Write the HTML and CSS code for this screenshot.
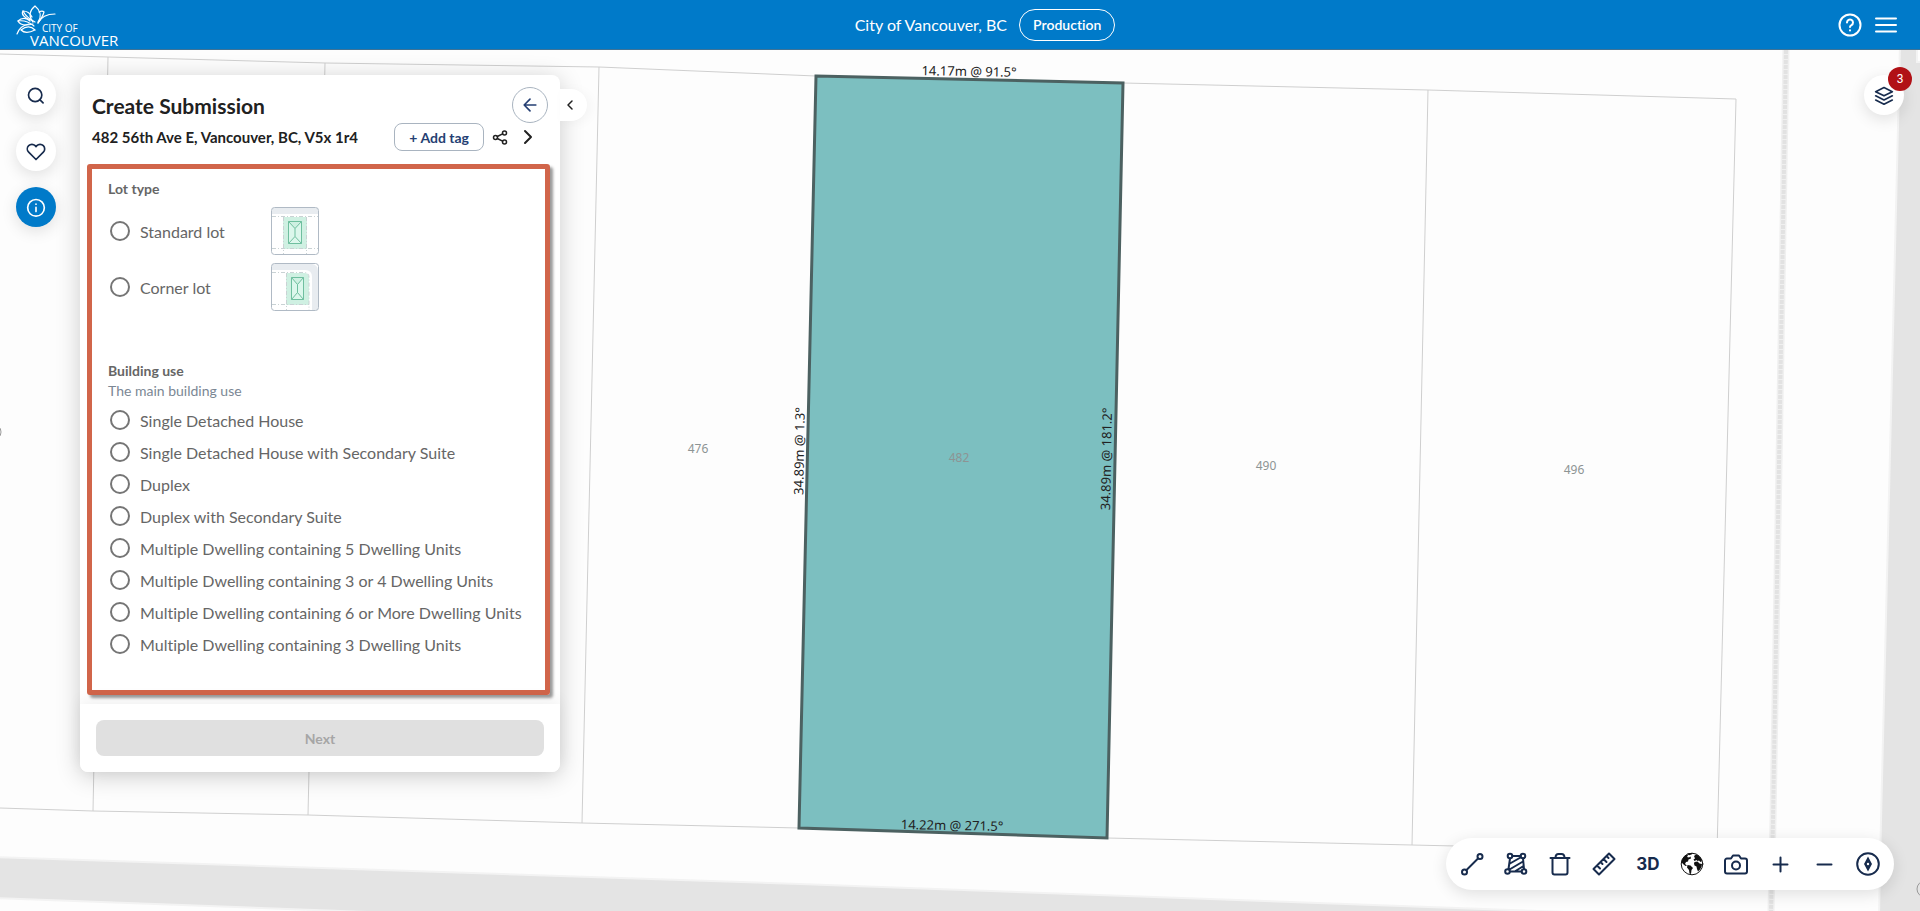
FILE: index.html
```
<!DOCTYPE html>
<html lang="en">
<head>
    <meta charset="UTF-8">
    <meta name="viewport" content="width=device-width, initial-scale=1.0">
    <title>City of Vancouver, BC</title>
    <link rel="stylesheet" href="styles.css">
</head>
<body>

    <header class="header">
        <a class="logo" href="#" aria-label="City of Vancouver">
            <svg width="116" height="48" viewBox="0 0 116 48" fill="none" stroke="#fff" stroke-width="1.2" stroke-linecap="round">
                <path d="M17 21C12 15 14 9 19 5c5 4 7 10 3 16"/>
                <path d="M15 19C8 17 5 13 7 10c4 0 7 2 9 6"/>
                <path d="M19 21C13 18 9 14 7 10"/>
                <path d="M23 11c2-1 4-1 5 0-1 4-3 7-6 11"/>
                <path d="M22 22c3-6 8-9 17-9"/>
                <path d="M14 20c-3-3-8-4-12 0 2 4 7 5 15 3"/>
                <path d="M2 20c6-1 11 1 16 5M1 33c2-6 6-9 12-10M5 29c3 3 8 3 14 0-4-4-9-4-14 0"/>
                <text class="logo-small" x="26" y="31">CITY OF</text>
                <text class="logo-big" x="14" y="45">VANCOUVER</text>
            </svg>
        </a>
        <div class="header-title">
            <span>City of Vancouver, BC</span>
            <span class="pill">Production</span>
        </div>
        <div class="header-actions">
            <button class="header-btn" aria-label="Help">
                <svg width="24" height="24" viewBox="0 0 24 24" fill="none" stroke="#fff" stroke-width="2" stroke-linecap="round"><circle cx="12" cy="12" r="10.500"/><path d="M9 9.500a3 3 0 1 1 4.500 2.600c-1 .6-1.500 1-1.500 2"/><path d="M12 17.300v.1"/></svg>
            </button>
            <button class="header-btn" aria-label="Menu">
                <svg width="24" height="24" viewBox="0 0 24 24" fill="none" stroke="#fff" stroke-width="2" stroke-linecap="round"><path d="M2 5.500h20M2 12h20M2 18.500h20"/></svg>
            </button>
        </div>
    </header>

    <main class="workspace">
        <svg class="map" viewBox="0 50 1920 861" preserveAspectRatio="xMidYMin slice">
            <!-- roads -->
            <g class="road">
                <path d="M-5 857L800 884L1620 914H420L-5 898z"/>
                <path d="M1900 45L1881 820L1879 915H1925V62H1917V45z"/>
            </g>
            <path class="rail" d="M1786 50L1773 820L1771 911"/>
            <path class="rail-dash" d="M1786 50L1773 820L1771 911"/>
            <!-- lot lines -->
            <g class="lot">
                <path d="M0 54L108 57L325 63L599 67L816 76L1123 83L1428 90L1736 99L1717 852"/>
                <path d="M0 808L93 811L308 815L582 823L799 828L1107 838L1412 845L1717 852"/>
                <path d="M108 57L93 811M325 63L308 815M599 67L582 823M1428 90L1412 845"/>
            </g>
            <path class="parcel" d="M816 76L1123 83L1107 838L799 828z"/>
            <g class="lot-number">
                <text x="698" y="453">476</text>
                <text x="959" y="462">482</text>
                <text x="1266" y="470">490</text>
                <text x="1574" y="474">496</text>
            </g>
            <g class="measure">
                <text x="969" y="76" transform="rotate(1 969 76)">14.17m @ 91.5°</text>
                <text x="952" y="830" transform="rotate(1 952 830)">14.22m @ 271.5°</text>
                <text x="804" y="451" transform="rotate(-89 804 451)">34.89m @ 1.3°</text>
                <text x="1111" y="459" transform="rotate(-89 1111 459)">34.89m @ 181.2°</text>
            </g>
            <circle class="edge-mark" cx="1925" cy="889" r="8"/>
            <circle class="edge-mark" cx="-7" cy="432" r="8"/>
        </svg>

        <nav class="rail-nav">
            <button class="round-btn" aria-label="Search">
                <svg width="20" height="20" viewBox="0 0 24 24"><circle cx="11" cy="12" r="8"/><path d="M20.500 21.500l-4-4"/></svg>
            </button>
            <button class="round-btn" aria-label="Favourites">
                <svg width="20" height="20" viewBox="0 0 24 24"><path d="M20.800 5.600a5.500 5.500 0 0 0-7.800 0L12 6.700l-1-1.100a5.500 5.500 0 0 0-7.800 7.800L12 22.200l8.800-8.800a5.500 5.500 0 0 0 0-7.800z"/></svg>
            </button>
            <button class="round-btn active" aria-label="Information">
                <svg width="20" height="20" viewBox="0 0 24 24"><circle cx="12" cy="13" r="10"/><path d="M12 12.500v5M12 8.500v.1"/></svg>
            </button>
        </nav>

        <section class="panel">
            <div class="panel-head">
                <div class="panel-row">
                    <h1>Create Submission</h1>
                    <button class="back-btn" aria-label="Back">
                        <svg width="20" height="20" viewBox="0 0 24 24"><path d="M19 12H5M12 5l-7 7 7 7"/></svg>
                    </button>
                </div>
                <div class="panel-row">
                    <h2>482 56th Ave E, Vancouver, BC, V5x 1r4</h2>
                    <div class="panel-tools">
                        <button class="tag-btn">+ Add tag</button>
                        <button class="plain-btn" aria-label="Share">
                            <svg width="16" height="16" viewBox="0 0 16 16"><circle cx="12.500" cy="4" r="2"/><circle cx="3.500" cy="8.500" r="2"/><circle cx="12.500" cy="13" r="2"/><path d="M5.300 7.500l5.300-2.600M5.300 9.500l5.300 2.600"/></svg>
                        </button>
                        <button class="plain-btn next-lot" aria-label="Next property">
                            <svg width="16" height="16" viewBox="0 0 16 16"><path d="M5 2l6 6-6 6"/></svg>
                        </button>
                    </div>
                </div>
            </div>

            <form class="form">
                <fieldset class="lot-type">
                    <legend>Lot type</legend>
                    <label class="lot-option">
                        <input type="radio" name="lot">
                        <span>Standard lot</span>
                        <svg width="48" height="48" viewBox="0 0 48 48" fill="none">
                            <rect x="0.500" y="0.500" width="47" height="47" rx="3" fill="#fff"/>
                            <path d="M1 1h46v6H1z" fill="#e8ecf0"/>
                            <path d="M12 10h24v32H12z" fill="#cff0e2"/>
                            <path d="M1 9.500h46M1 41.500h46M12.500 10v37M35.500 10v37" stroke="#c9d2d4" stroke-dasharray="4 2 1 2"/>
                            <path d="M17.500 14.500h13v22h-13zM17.500 14.500l6.500 7 6.500-7M17.500 36.500l6.500-7 6.500 7M24 21.500v8" fill="#dcf7ec" stroke="#6fbf9f"/>
                            <rect x="0.500" y="0.500" width="47" height="47" rx="3" stroke="#b0bac5"/>
                        </svg>
                    </label>
                    <label class="lot-option">
                        <input type="radio" name="lot">
                        <span>Corner lot</span>
                        <svg width="48" height="48" viewBox="0 0 48 48" fill="none">
                            <rect x="0.500" y="0.500" width="47" height="47" rx="3" fill="#fff"/>
                            <path d="M1 1h40q6 1 6 7v39h-6V14q0-7-7-7H1z" fill="#e8ecf0"/>
                            <path d="M15 10h18q5 0 5 5v27H15z" fill="#cff0e2"/>
                            <path d="M1 9.500h32q5 0 5 5V47M1 41.500h37M15.500 10v37" stroke="#c9d2d4" stroke-dasharray="4 2 1 2"/>
                            <path d="M20.500 14.500h12v22h-12zM20.500 14.500l6 7 6-7M20.500 36.500l6-7 6 7M26.500 21.500v8" fill="#dcf7ec" stroke="#6fbf9f"/>
                            <rect x="0.500" y="0.500" width="47" height="47" rx="3" stroke="#b0bac5"/>
                        </svg>
                    </label>
                </fieldset>

                <fieldset class="building-use">
                    <legend>Building use</legend>
                    <p>The main building use</p>
                    <label><input type="radio" name="use"><span>Single Detached House</span></label>
                    <label><input type="radio" name="use"><span>Single Detached House with Secondary Suite</span></label>
                    <label><input type="radio" name="use"><span>Duplex</span></label>
                    <label><input type="radio" name="use"><span>Duplex with Secondary Suite</span></label>
                    <label><input type="radio" name="use"><span>Multiple Dwelling containing 5 Dwelling Units</span></label>
                    <label><input type="radio" name="use"><span>Multiple Dwelling containing 3 or 4 Dwelling Units</span></label>
                    <label><input type="radio" name="use"><span>Multiple Dwelling containing 6 or More Dwelling Units</span></label>
                    <label><input type="radio" name="use"><span>Multiple Dwelling containing 3 Dwelling Units</span></label>
                </fieldset>
            </form>

            <div class="panel-foot">
                <button class="next-btn" disabled>Next</button>
            </div>
        </section>

        <button class="collapse-btn" aria-label="Collapse panel">
            <svg width="16" height="16" viewBox="0 0 16 16"><path d="M10 4L6 8l4 4"/></svg>
        </button>

        <button class="round-btn layers-btn" aria-label="Layers">
            <svg width="20" height="20" viewBox="0 0 24 24"><path d="M12 3L2 8l10 5 10-5zM2 13l10 5 10-5M2 18l10 5 10-5"/></svg>
            <span class="badge">3</span>
        </button>

        <div class="toolbar">
            <button aria-label="Draw line"><svg width="24" height="24" viewBox="0 0 24 24"><circle cx="4.500" cy="20" r="2.500"/><circle cx="20" cy="4.500" r="2.500"/><path d="M6.500 18L18 6.500"/></svg></button>
            <button aria-label="Draw area"><svg width="24" height="24" viewBox="0 0 24 24"><circle cx="6" cy="4" r="2.300"/><circle cx="19" cy="4" r="2.300"/><circle cx="3.500" cy="19.500" r="2.300"/><circle cx="20" cy="19.500" r="2.300"/><path d="M8.500 4h8M19 6.500l1 10.500M6 19.500h11.500M6 6.500L4.500 17M6 11.500L16.500 5.500M5.500 17.500L19 9.500M11.500 19L19.500 14"/></svg></button>
            <button aria-label="Delete"><svg width="24" height="24" viewBox="0 0 24 24"><path d="M2.500 6h19M4.500 6v14.500q0 2 2 2h11q2 0 2-2V6M7.500 6q0-4 3-4h3q3 0 3 4"/></svg></button>
            <button aria-label="Measure"><svg width="24" height="24" viewBox="0 0 24 24"><path d="M1.500 17L17 1.500l5.500 5.500L7 22.500zM5 13.500l3 3M8.500 10l2 2M11.500 7l3 3M14.500 4l2 2"/></svg></button>
            <button class="three-d">3D</button>
            <button aria-label="Basemap"><svg class="globe" width="24" height="24" viewBox="0 0 24 24"><circle cx="12" cy="12" r="10.800" fill="#fff" stroke="#111" stroke-width="1"/><g fill="#111" stroke="none"><path d="M1.500 10C2 6 4.500 3.500 7 2.500l1 1-1 1.500 2 .5 1.500-1 .5 2-2.500 1-.5 2-2 .5L5 12l2 1.500-1.500.5L3 12z"/><path d="M7 1.800Q10 .8 13 1.200l-1.500 1.300-2.500.8z"/><path d="M7.500 13l3 .5 2.500 2.500-1.500 2-.5 4-1.500-.5-.5-3.500-2-2.500z"/><path d="M14 4l2-1.500 2 .8Q21 5.500 22 9l-1.500 1-1.500-1.500-1.500.5-1-1-2 1-1-1.500 1.500-1z"/><path d="M14.500 10l3-.5 2 2 2.500.5q0 3-2 5.500l-2 2-1-2.500-.5-2.500-2-1-.5-2z"/></g></svg></button>
            <button aria-label="Screenshot"><svg width="24" height="24" viewBox="0 0 24 24"><path d="M23 19.500a2 2 0 0 1-2 2H3a2 2 0 0 1-2-2v-11a2 2 0 0 1 2-2h4l2-3h6l2 3h4a2 2 0 0 1 2 2z"/><circle cx="12" cy="13.500" r="4"/></svg></button>
            <button aria-label="Zoom in"><svg width="24" height="24" viewBox="0 0 24 24"><path d="M12.500 5.500v14M5.500 12.500h14"/></svg></button>
            <button aria-label="Zoom out"><svg width="24" height="24" viewBox="0 0 24 24"><path d="M5.500 12.500h14"/></svg></button>
            <button aria-label="Compass"><svg width="24" height="24" viewBox="0 0 24 24"><circle cx="12" cy="12" r="10.800"/><path class="needle" d="M12 4.500l4 7.500-4 7.500L8 12z"/><circle cx="12" cy="12" r="1.200" fill="#fff" stroke="none"/></svg></button>
        </div>
    </main>

</body>
</html>
```

FILE: styles.css
```
* {
    box-sizing: border-box;
}
body {
    margin: 0;
    min-height: 100vh;
    display: flex;
    flex-direction: column;
    font-family: Lato, sans-serif;
    font-variant-ligatures: none;
    color: #212121;
    background: #fdfdfd;
}
button {
    font-family: inherit;
    padding: 0;
    border: none;
    background: none;
    cursor: pointer;
    display: flex;
    align-items: center;
    justify-content: center;
}
button svg {
    fill: none;
    stroke: #172b4d;
    stroke-width: 2;
    stroke-linecap: round;
    stroke-linejoin: round;
}

/* header */
.header {
    height: 50px;
    padding: 0 22px 0 16px;
    display: flex;
    align-items: center;
    justify-content: space-between;
    background: #007ac9;
    border-bottom: 1px solid #3f7396;
    color: #fff;
}
.logo {
    display: flex;
}
.logo svg {
    overflow: visible;
}
.logo-small, .logo-big {
    font-family: "Open Sans", sans-serif;
    fill: #fff;
    stroke: none;
}
.logo-small {
    font-size: 10px;
}
.logo-big {
    font-size: 15px;
    font-weight: 500;
}
.header-title {
    display: flex;
    align-items: center;
    gap: 12px;
    font-size: 16px;
}
.pill {
    height: 32px;
    padding: 0 13px;
    border: 1px solid #fff;
    border-radius: 16px;
    font-size: 14px;
    font-weight: 600;
    line-height: 30px;
}
.header-actions {
    display: flex;
    justify-content: flex-end;
    gap: 12px;
}
.header-btn svg {
    stroke: #fff;
}

/* map */
.workspace {
    position: relative;
    flex: 1;
    display: flex;
    align-items: flex-start;
    padding: 25px 16px 20px;
    overflow: hidden;
}
.map {
    position: absolute;
    inset: 0;
    width: 100%;
    height: 100%;
}
.road {
    fill: #e4e4e4;
    stroke: #f3f3f3;
    stroke-width: 2;
}
.rail {
    fill: none;
    stroke: #f0f0f0;
    stroke-width: 7;
}
.rail-dash {
    fill: none;
    stroke: #e2e2e2;
    stroke-width: 4;
    stroke-dasharray: 4 1;
}
.lot {
    fill: none;
    stroke: #cfcfcf;
    stroke-width: 1;
}
.parcel {
    fill: #7cbfc0;
    stroke: #4c6161;
    stroke-width: 3;
}
.lot-number, .measure {
    font-family: "Noto Sans", sans-serif;
    text-anchor: middle;
}
.lot-number {
    font-size: 12px;
    fill: #8d9494;
}
.measure {
    font-size: 13px;
    fill: #222;
}
.edge-mark {
    fill: none;
    stroke: #999;
}

/* side buttons */
.rail-nav {
    position: relative;
    display: flex;
    flex-direction: column;
    gap: 16px;
    margin-right: 24px;
}
.round-btn {
    position: relative;
    width: 40px;
    height: 40px;
    border-radius: 50%;
    background: #fff;
    box-shadow: 0 4px 16px rgba(0, 0, 0, 0.12);
}
.round-btn.active {
    background: #007ac9;
}
.round-btn.active svg {
    stroke: #fff;
}
.layers-btn {
    margin-left: auto;
}
.badge {
    position: absolute;
    top: -8px;
    right: -8px;
    width: 24px;
    height: 24px;
    border-radius: 50%;
    background: #b11116;
    color: #fff;
    font-family: Roboto, sans-serif;
    font-size: 12px;
    line-height: 24px;
}

/* panel */
.panel {
    position: relative;
    width: 480px;
    border-radius: 8px;
    background: #fff;
    box-shadow: 0 4px 24px rgba(0, 0, 0, 0.2);
}
.panel-head {
    padding: 12px 12px 0;
}
.panel-row {
    display: flex;
    align-items: center;
    justify-content: space-between;
}
h1, h2 {
    margin: 0;
    font-weight: 700;
}
h1 {
    font-size: 21px;
}
h2 {
    font-size: 15px;
}
.back-btn {
    width: 36px;
    height: 36px;
    border: 1px solid #a9b4c0;
    border-radius: 50%;
}
.back-btn svg {
    stroke: #253f73;
}
.panel-tools {
    display: flex;
    align-items: center;
    gap: 8px;
    padding-right: 12px;
}
.tag-btn {
    height: 28px;
    padding: 0 14px;
    border: 1px solid #a9b4c0;
    border-radius: 8px;
    color: #253f73;
    font-size: 14px;
    font-weight: 700;
}
.plain-btn svg {
    stroke: #212121;
    stroke-width: 1.5;
}
.next-lot {
    margin-left: 4px;
}
.next-lot svg {
    stroke-width: 2;
}

/* form */
.form {
    margin: 13px 10px 9px 7px;
    padding: 10px 16px 30px;
    border: 5px solid #d1654a;
    border-radius: 3px;
    box-shadow: 3px 3px 3px rgba(0, 0, 0, 0.4);
    color: #666;
}
fieldset {
    margin: 0;
    padding: 0;
    border: none;
}
legend {
    padding: 0;
    font-size: 14px;
    line-height: 20px;
    font-weight: 700;
}
fieldset p {
    margin: 0 0 3px;
    font-size: 14px;
    line-height: 20px;
    color: #7b8794;
}
fieldset label {
    display: flex;
    align-items: center;
    gap: 10px;
    height: 32px;
    padding-left: 2px;
    font-size: 16px;
}
input[type="radio"] {
    appearance: none;
    flex: none;
    width: 20px;
    height: 20px;
    margin: 0;
    border: 2px solid #757575;
    border-radius: 50%;
}
input[type="radio"]:checked {
    border-width: 6px;
}
.lot-type {
    padding-bottom: 46px;
}
.lot-type legend {
    margin-bottom: 4px;
}
.lot-type .lot-option {
    height: 56px;
}
.lot-option span {
    width: 121px;
}
.panel-foot {
    padding: 16px;
    border-radius: 0 0 8px 8px;
    box-shadow: 0 -4px 16px rgba(0, 0, 0, 0.06);
    background: #fff;
}
.next-btn {
    width: 100%;
    height: 36px;
    border-radius: 8px;
    background: #e0e0e0;
    color: #a6a6a6;
    font-size: 14px;
    font-weight: 700;
}
.collapse-btn {
    position: relative;
    width: 27px;
    height: 32px;
    margin-top: 14px;
    padding-right: 8px;
    border-radius: 0 16px 16px 0;
    background: #fff;
    box-shadow: 4px 2px 12px rgba(0, 0, 0, 0.04);
}
.collapse-btn svg {
    stroke: #212121;
    stroke-width: 1.5;
}

/* bottom toolbar */
.toolbar {
    position: absolute;
    right: 26px;
    bottom: 21px;
    display: flex;
    height: 52px;
    padding: 0 4px;
    border-radius: 26px;
    background: #fff;
    box-shadow: 0 4px 16px rgba(0, 0, 0, 0.12);
}
.toolbar button {
    width: 44px;
    height: 52px;
}
.toolbar .three-d {
    color: #172b4d;
    font-family: Inter, sans-serif;
    font-size: 17px;
    font-weight: 700;
}
.needle {
    fill: #172b4d;
    stroke: none;
}
```
